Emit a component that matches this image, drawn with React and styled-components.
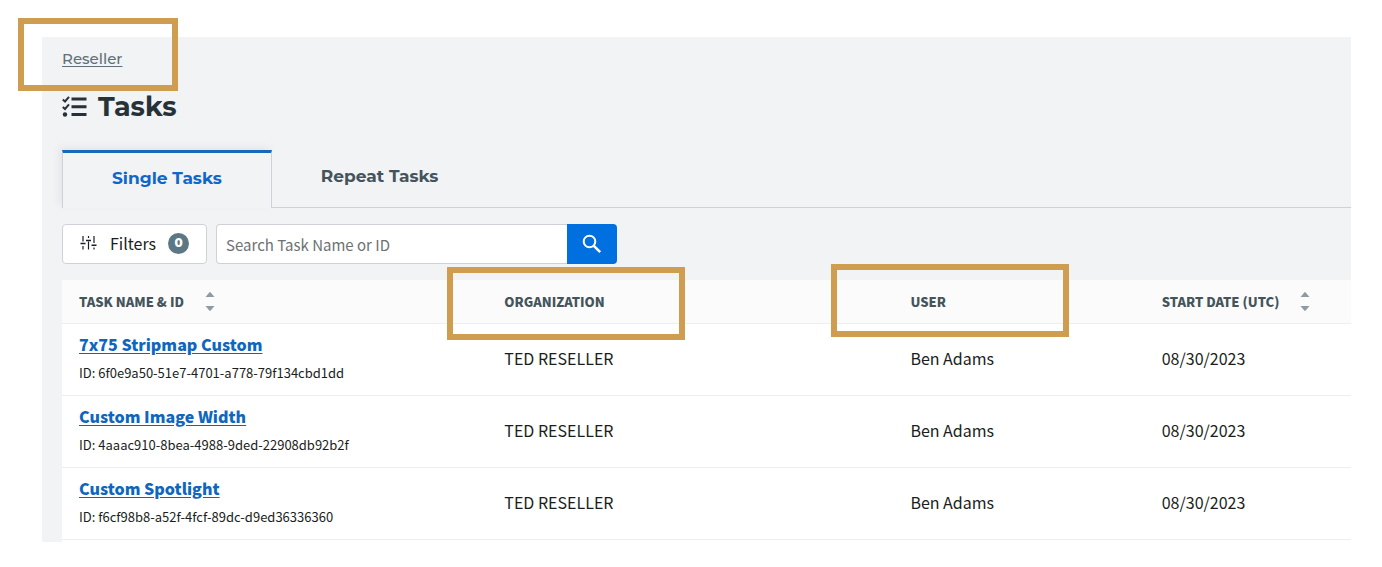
import { useState } from "react";
import styled, { createGlobalStyle } from "styled-components";

const TASKS = [
  {
    name: "7x75 Stripmap Custom",
    id: "6f0e9a50-51e7-4701-a778-79f134cbd1dd",
    organization: "TED RESELLER",
    user: "Ben Adams",
    startDate: "08/30/2023",
  },
  {
    name: "Custom Image Width",
    id: "4aaac910-8bea-4988-9ded-22908db92b2f",
    organization: "TED RESELLER",
    user: "Ben Adams",
    startDate: "08/30/2023",
  },
  {
    name: "Custom Spotlight",
    id: "f6cf98b8-a52f-4fcf-89dc-d9ed36336360",
    organization: "TED RESELLER",
    user: "Ben Adams",
    startDate: "08/30/2023",
  },
];

function SortButton({ label }) {
  return (
    <SortToggle type="button" aria-label={label}>
      <svg width="10" height="20" viewBox="0 0 10 20" fill="currentColor">
        <path d="M.5 5 4.300.5a.9.9 0 0 1 1.400 0L9.500 5z" />
        <path d="M.5 14l3.800 4.500a.9.9 0 0 0 1.400 0L9.500 14z" />
      </svg>
    </SortToggle>
  );
}

function TasksIcon() {
  return (
    <svg width="25" height="22" viewBox="0 0 25 22" fill="none" stroke="currentColor" aria-hidden="true">
      <path d="M.8 3.500l2.200 2L7 .8M.8 11l2.200 2L7 8.300" strokeWidth="2" />
      <path d="M9.500 3h15M9.500 10.800h15M9.500 18.500h15" strokeWidth="3" />
      <circle cx="3" cy="18.500" r="2.200" fill="currentColor" stroke="none" />
    </svg>
  );
}

function SlidersIcon() {
  return (
    <svg width="18" height="14" viewBox="0 0 18 14" fill="none" stroke="currentColor" aria-hidden="true">
      <path d="M3 0v5.500M3 10v3.500M8.500 0v2M8.500 5.500v8M14 0v7M14 11.500v2" strokeWidth="1.200" />
      <path d="M0.500 7.500h5M6 4.500h5M11.500 9.200h5" strokeWidth="1.600" />
    </svg>
  );
}

function SearchIcon() {
  return (
    <svg width="20" height="20" viewBox="0 0 20 20" fill="none" stroke="currentColor" aria-hidden="true">
      <circle cx="7.500" cy="7.500" r="5.800" strokeWidth="2" />
      <path d="M11.800 11.800l6.400 6.400" strokeWidth="2.600" />
    </svg>
  );
}

function App() {
  const [tab, setTab] = useState("single");
  const [search, setSearch] = useState("");

  return (
    <>
      <GlobalStyle />
      <Page>
        <Breadcrumb>
          <BreadcrumbLink href="#reseller">Reseller</BreadcrumbLink>
          <Highlight $top="-19px" $left="-44px" $width="160px" />
        </Breadcrumb>
        <Title>
          <TasksIcon />
          Tasks
        </Title>
        <Tabs role="tablist">
          <Tab
            type="button"
            role="tab"
            aria-selected={tab === "single"}
            $active={tab === "single"}
            onClick={() => setTab("single")}
          >
            Single Tasks
          </Tab>
          <Tab
            type="button"
            role="tab"
            aria-selected={tab === "repeat"}
            $active={tab === "repeat"}
            onClick={() => setTab("repeat")}
          >
            Repeat Tasks
          </Tab>
          <TabsRest />
        </Tabs>
        <Toolbar>
          <FiltersButton type="button">
            <SlidersIcon />
            Filters
            <Count>0</Count>
          </FiltersButton>
          <SearchForm role="search" onSubmit={(e) => e.preventDefault()}>
            <SearchInput
              type="text"
              aria-label="Search Task Name or ID"
              placeholder="Search Task Name or ID"
              value={search}
              onChange={(e) => setSearch(e.target.value)}
            />
            <SearchButton type="submit" aria-label="Search">
              <SearchIcon />
            </SearchButton>
          </SearchForm>
        </Toolbar>
        <Table>
          <thead>
            <tr>
              <HeadCell $width="33%" scope="col">
                <HeadLabel>
                  TASK NAME &amp; ID
                  <SortButton label="Sort by task name" />
                </HeadLabel>
              </HeadCell>
              <HeadCell $width="31.5%" scope="col">
                ORGANIZATION
                <Highlight $top="-13px" $left="-40px" $width="238px" />
              </HeadCell>
              <HeadCell $width="19.5%" scope="col">
                USER
                <Highlight $top="-16px" $left="-62px" $width="238px" />
              </HeadCell>
              <HeadCell $width="16%" scope="col">
                <HeadLabel>
                  START DATE (UTC)
                  <SortButton label="Sort by start date" />
                </HeadLabel>
              </HeadCell>
            </tr>
          </thead>
          <tbody>
            {TASKS.map((task) => (
              <tr key={task.id}>
                <Cell>
                  <TaskLink href={`#${task.id}`}>{task.name}</TaskLink>
                  <TaskId>ID: {task.id}</TaskId>
                </Cell>
                <Cell>{task.organization}</Cell>
                <Cell>{task.user}</Cell>
                <Cell>{task.startDate}</Cell>
              </tr>
            ))}
          </tbody>
        </Table>
      </Page>
    </>
  );
}

export default App;

const GlobalStyle = createGlobalStyle`
  :root {
    --font-body: "Noto Sans CJK SC", "Open Sans", sans-serif;
    --font-heading: Montserrat, Inter, sans-serif;
    --blue: #006fdf;
    --link: #0f67bd;
    --slate: #44545c;
    --border: #ced2d6;
    --panel: #f2f3f5;
  }

  * {
    box-sizing: border-box;
  }

  body {
    margin: 0;
    background: white;
    color: #1a1e20;
    font-family: var(--font-body);
    font-size: 16px;
  }

  button,
  input {
    font: inherit;
  }
`;

const Page = styled.main`
  margin: 37px 31px 25px 42px;
  padding: 0 0 0 20px;
  background: var(--panel);
`;

const Breadcrumb = styled.nav`
  position: relative;
  display: flex;
  align-items: center;
  height: 42px;
  font-family: var(--font-heading);
  font-size: 15px;
  font-weight: 500;
`;

const BreadcrumbLink = styled.a`
  color: #60707a;
  text-underline-offset: 2px;
`;

/* callout frame drawn over the element it points at */
const Highlight = styled.span`
  position: absolute;
  z-index: 1;
  top: ${({ $top }) => $top};
  left: ${({ $left }) => $left};
  width: ${({ $width }) => $width};
  height: 73px;
  border: 6px solid #cf9d50;
  pointer-events: none;
`;

const Title = styled.h1`
  display: flex;
  align-items: center;
  gap: 11px;
  margin: 10px 0 26px;
  color: #263238;
  font-family: var(--font-heading);
  font-size: 27px;
  font-weight: 700;
  line-height: 35px;
`;

const Tabs = styled.div`
  display: flex;
  height: 58px;
`;

const Tab = styled.button`
  padding: 0 49px 6px;
  border: 0 solid var(--border);
  border-width: ${({ $active }) => ($active ? "3px 1px 0" : "0 0 1px")};
  border-top-color: #1569b8;
  background: var(--panel);
  box-shadow: ${({ $active }) => ($active ? "-3px -3px 8px #0000000f" : "none")};
  color: ${({ $active }) => ($active ? "#0f67c8" : "var(--slate)")};
  font-family: var(--font-heading);
  font-size: 17px;
  font-weight: 700;
  cursor: pointer;
`;

const TabsRest = styled.div`
  flex: 1;
  border-bottom: 1px solid var(--border);
`;

const Toolbar = styled.div`
  display: flex;
  gap: 9px;
  padding: 16px 0;
`;

const FiltersButton = styled.button`
  display: flex;
  align-items: center;
  gap: 12px;
  height: 40px;
  padding: 0 17px 2px;
  border: 1px solid var(--border);
  border-radius: 4px;
  background: white;
  color: #1a1e20;
  line-height: 20px;
  cursor: pointer;
`;

const Count = styled.span`
  display: flex;
  justify-content: center;
  align-items: center;
  width: 21px;
  height: 21px;
  border-radius: 50%;
  background: #5c7885;
  color: white;
  font-family: var(--font-heading);
  font-size: 12px;
  font-weight: 800;
`;

const SearchForm = styled.form`
  display: flex;
  width: 401px;
  height: 40px;
`;

const SearchInput = styled.input`
  flex: 1;
  min-width: 0;
  padding: 0 9px;
  border: 1px solid var(--border);
  border-right: 0;
  border-radius: 4px 0 0 4px;
  background: white;
  font-size: 15px;

  &::placeholder {
    color: #6d7173;
  }
`;

const SearchButton = styled.button`
  display: flex;
  justify-content: center;
  align-items: center;
  width: 50px;
  padding: 0;
  border: 0;
  border-radius: 0 4px 4px 0;
  background: var(--blue);
  color: white;
  cursor: pointer;
`;

const Table = styled.table`
  width: 100%;
  border-spacing: 0;
  border-bottom: 2px solid white;
  background: white;
  table-layout: fixed;
`;

const HeadCell = styled.th`
  position: relative;
  width: ${({ $width }) => $width};
  height: 44px;
  padding: 0 17px;
  border-bottom: 1px solid #eceef0;
  background: #fbfbfb;
  color: var(--slate);
  font-size: 13px;
  font-weight: 900;
  text-align: left;
  white-space: nowrap;
`;

const HeadLabel = styled.span`
  display: flex;
  align-items: center;
  gap: 21px;
`;

const SortToggle = styled.button`
  display: flex;
  padding: 0;
  border: 0;
  background: none;
  color: #8d9ba3;
  cursor: pointer;
`;

const Cell = styled.td`
  height: 72px;
  padding: 0 17px 4px;
  border-bottom: 1px solid #eceef0;
`;

const TaskLink = styled.a`
  color: var(--link);
  font-weight: 900;
  line-height: 30px;
  text-underline-offset: 2px;
`;

const TaskId = styled.div`
  font-size: 13px;
  line-height: 28px;
`;
